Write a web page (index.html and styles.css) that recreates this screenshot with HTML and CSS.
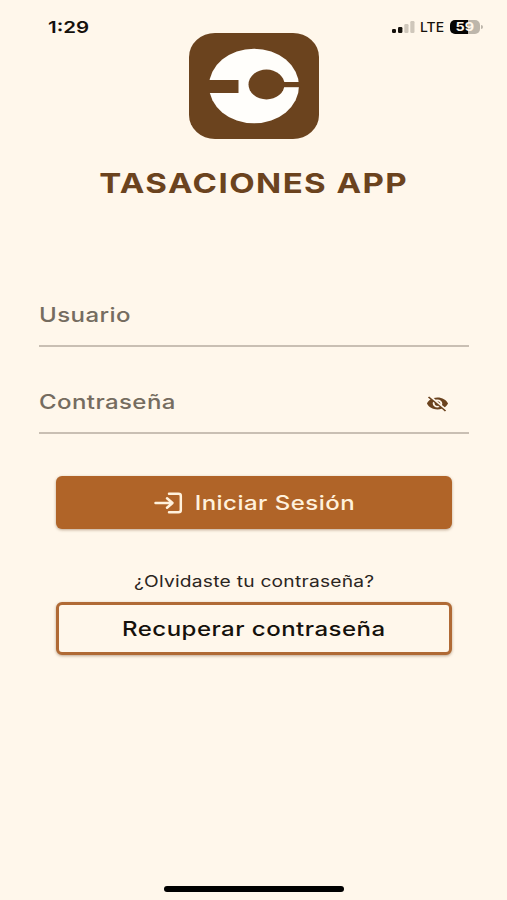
FILE: index.html
```html
<!DOCTYPE html>
<html lang="es">
  <head>
    <meta charset="UTF-8" />
    <meta name="viewport" content="width=device-width, initial-scale=1.0" />
    <title>Tasaciones App</title>
    <link rel="stylesheet" href="styles.css">
  </head>
  <body>
    <header class="status">
      <span class="text time">1:29</span>
      <div class="status-icons">
        <svg class="signal" width="23" height="14" viewBox="0 0 23 14">
          <rect x="0" y="9" width="4" height="4" rx="1.2" fill="#15110c" />
          <rect x="6" y="7" width="4.4" height="6" rx="1.2" fill="#15110c" />
          <rect x="12.3" y="4" width="4.2" height="9" rx="1.2" fill="#cfc7bb" />
          <rect x="18.3" y="1" width="4.2" height="12" rx="1.2" fill="#cfc7bb" />
        </svg>
        <span class="text network">LTE</span>
        <div class="battery"><span class="text level">59</span></div>
        <span class="battery-tip"></span>
      </div>
    </header>
    <main class="login">
      <svg class="logo" width="130" height="106" viewBox="0 0 130 106">
        <rect width="130" height="106" rx="26" ry="24" fill="#6b431e" />
        <ellipse cx="65" cy="53" rx="45" ry="37.3" fill="#fffefb" />
        <rect x="18" y="47" width="31.5" height="13" fill="#6b431e" />
        <ellipse cx="77.5" cy="51.5" rx="18" ry="15" fill="#6b431e" />
        <rect x="92" y="49" width="20" height="5.2" fill="#6b431e" />
      </svg>
      <h1 class="title"><span class="text">TASACIONES APP</span></h1>
      <form class="form">
        <label class="field">
          <span class="text">Usuario</span>
        </label>
        <label class="field">
          <span class="text">Contraseña</span>
          <svg class="eye" width="23" height="19" viewBox="0 0 24 24" preserveAspectRatio="none">
            <path fill="#6b431e" d="M12 7c2.76 0 5 2.24 5 5 0 .65-.13 1.26-.36 1.83l2.92 2.92c1.51-1.26 2.7-2.89 3.43-4.75-1.73-4.39-6-7.5-11-7.5-1.4 0-2.74.25-3.98.7l2.16 2.16C10.74 7.13 11.35 7 12 7zM2 4.27l2.28 2.28.46.46C3.08 8.3 1.78 10.02 1 12c1.73 4.39 6 7.5 11 7.5 1.55 0 3.03-.3 4.38-.84l.42.42L19.73 22 21 20.73 3.27 3 2 4.27zM7.53 9.8l1.55 1.55c-.05.21-.08.43-.08.65 0 1.66 1.34 3 3 3 .22 0 .44-.03.65-.08l1.55 1.55c-.67.33-1.41.53-2.2.53-2.76 0-5-2.24-5-5 0-.79.2-1.53.53-2.2zm4.31-.78l3.15 3.15.02-.16c0-1.66-1.34-3-3-3l-.17.01z" />
          </svg>
        </label>
        <button class="button primary" type="button">
          <svg width="29" height="22" viewBox="0 0 29 22" fill="none" stroke="#fff1dc" stroke-width="2.5" stroke-linecap="round" stroke-linejoin="round">
            <path d="M1.5 11H18M13 6.2l5.5 4.8-5.5 4.8" />
            <path d="M15 1.7h9.5q2.3 0 2.3 2v14.6q0 2-2.3 2H15" />
          </svg>
          <span class="text">Iniciar Sesión</span>
        </button>
        <p class="hint"><span class="text">¿Olvidaste tu contraseña?</span></p>
        <button class="button outline" type="button">
          <span class="text">Recuperar contraseña</span>
        </button>
      </form>
    </main>
    <footer class="home-bar"></footer>
  </body>
</html>
```

FILE: styles.css
```css
html {
  box-sizing: border-box;
  font-family: Inter, "Liberation Sans", sans-serif;
}

*,
*:before,
*:after {
  box-sizing: inherit;
}

body {
  margin: 0;
  height: 900px;
  display: flex;
  flex-direction: column;
  background-color: #fff7eb;
  color: #15110c;
}

/* wide lettering used all over the app */
.text {
  display: inline-block;
  white-space: nowrap;
  transform: scaleX(1.2);
}

.status {
  height: 33px;
  padding: 16px 24px 0 48px;
  display: flex;
  justify-content: space-between;
  align-items: flex-start;
}

.time {
  font-size: 16.5px;
  line-height: 22px;
  font-weight: 600;
  transform: scaleX(1.24);
  transform-origin: left;
}

.status-icons {
  height: 22px;
  display: flex;
  align-items: center;
}

.network {
  width: 24px;
  margin: 0 6px 0 5px;
  font-size: 13px;
  font-weight: 500;
  transform: scaleX(1.07);
  transform-origin: left;
}

.battery {
  width: 30px;
  height: 14px;
  border-radius: 5px;
  display: flex;
  justify-content: center;
  align-items: center;
  background: linear-gradient(to right, #050403 59%, #bdb6ab 59%);
  color: #fff7eb;
}

.level {
  font-size: 12px;
  line-height: 14px;
  font-weight: 700;
}

.battery-tip {
  width: 2px;
  height: 4px;
  margin-left: 1px;
  border-radius: 0 2px 2px 0;
  background-color: #bdb6ab;
}

.login {
  flex-grow: 1;
  display: flex;
  flex-direction: column;
  align-items: center;
}

.logo {
  display: block;
}

.title {
  margin: 26px 0 0;
  padding-left: 1px;
  font-size: 27.5px;
  line-height: 36px;
  font-weight: 700;
  letter-spacing: 1.2px;
  color: #6b431e;
}

.form {
  width: 430px;
  margin-top: 82px;
}

.field {
  height: 64px;
  padding: 2px 20px 0 0;
  margin-bottom: 23px;
  display: flex;
  justify-content: space-between;
  align-items: center;
  border-bottom: 2px solid #c9bfb3;
  font-size: 20px;
  font-weight: 500;
  letter-spacing: 0.35px;
  color: #756c60;
}

.field .text {
  transform-origin: left;
}

.eye {
  margin-top: 3px;
}

.button {
  width: 396px;
  height: 53px;
  margin: 0 auto;
  padding: 0;
  display: flex;
  justify-content: center;
  align-items: center;
  border: none;
  border-radius: 6px;
  font-family: inherit;
  font-size: 20px;
  font-weight: 550;
  letter-spacing: 0.4px;
  box-shadow: 0 1px 3px rgba(107, 67, 30, 0.45);
}

.primary {
  margin-top: 42px;
  padding-right: 11px;
  gap: 25px;
  background-color: #b06428;
  color: #fff1dc;
}

.hint {
  margin: 40px 0 9px;
  padding-left: 1px;
  text-align: center;
  font-size: 16px;
  line-height: 24px;
  letter-spacing: 0.2px;
  color: #2b251e;
}

.outline {
  border: 3px solid #b06a35;
  background-color: #fff7eb;
  color: #15110c;
}

.home-bar {
  width: 180px;
  height: 6px;
  margin: 0 auto 8px;
  border-radius: 3px;
  background-color: #000;
}
```
